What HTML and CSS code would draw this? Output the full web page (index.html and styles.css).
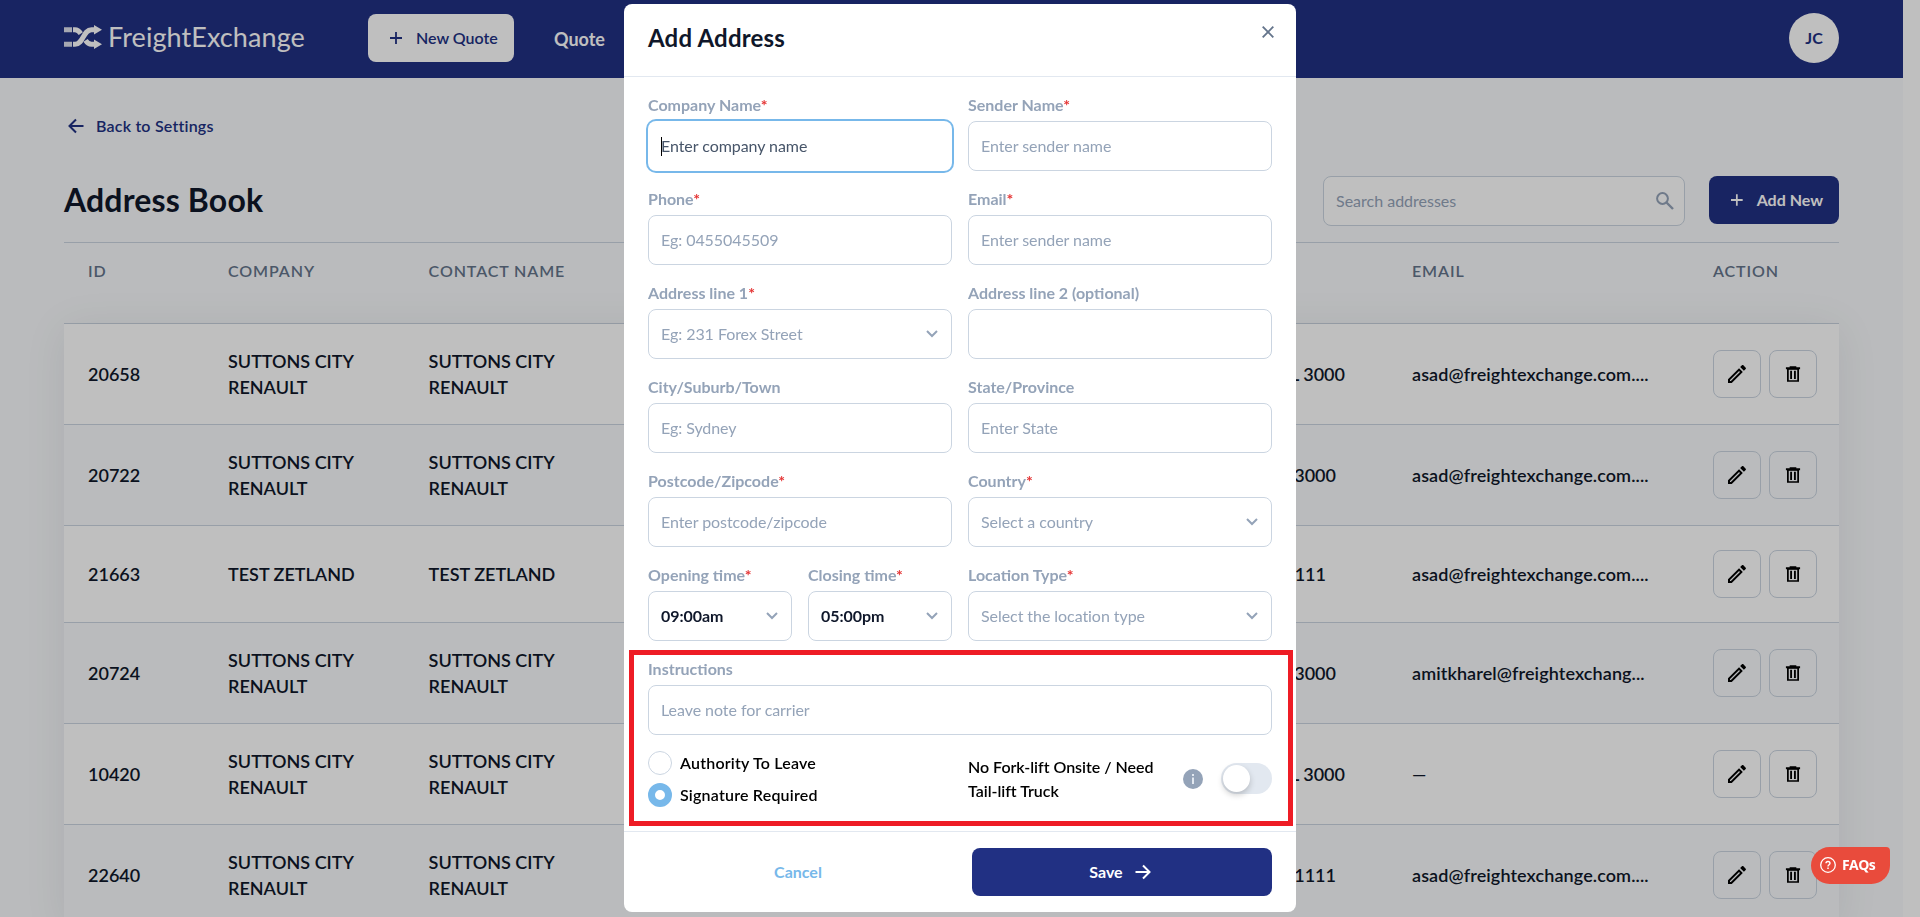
FILE: index.html
```html
<!DOCTYPE html>
<html lang="en">
<head>
    <meta charset="UTF-8">
    <meta name="viewport" content="width=device-width, initial-scale=1.0">
    <title>Address Book - FreightExchange</title>
    <link rel="stylesheet" href="styles.css">
</head>
<body>

<!-- Shared icons -->
<svg class="sprite">
    <symbol id="pencil" viewBox="0 0 24 24">
        <path d="M14.06 9.02l.92.92L5.92 19H5v-.92l9.06-9.06M17.66 3c-.25 0-.51.1-.7.29l-1.83 1.83 3.75 3.75 1.83-1.83c.39-.39.39-1.02 0-1.41l-2.34-2.34c-.2-.2-.45-.29-.71-.29zm-3.6 3.19L3 17.25V21h3.75L17.81 9.94l-3.75-3.75z"/>
    </symbol>
    <symbol id="trash" viewBox="0 0 24 24">
        <path d="M3.500 4H8V2.600h8V4h4.500v2.200H3.500z"/>
        <path fill-rule="evenodd" d="M4.800 6h14.400v15.400H4.800zM6.900 7v12.400h10.200V7z"/>
        <path d="M8.600 8h2.200v10H8.600zM13.200 8h2.200v10h-2.200z"/>
    </symbol>
    <symbol id="chevron" viewBox="0 0 12 8">
        <path d="M1 1l5 5 5-5" fill="none" stroke="currentColor" stroke-width="2"/>
    </symbol>
    <symbol id="plus" viewBox="0 0 14 14">
        <path d="M7 1v12M1 7h12" fill="none" stroke="currentColor" stroke-width="1.800"/>
    </symbol>
    <symbol id="arrow" viewBox="0 0 16 16">
        <path d="M0.500 8H14M8 1.500L14.500 8 8 14.500" fill="none" stroke="currentColor" stroke-width="2"/>
    </symbol>
</svg>

<div class="page">
    <header class="topbar">
        <div class="logo">
            <svg width="38" height="24" viewBox="0 0 38 24">
                <path d="M9 4.700h2c3 0 4.300 1.600 5.800 3.900" fill="none" stroke="#fff" stroke-width="5"/>
                <path d="M9 19.300h2c8.500 0 8-14.600 16.500-14.600h4" fill="none" stroke="#fff" stroke-width="5"/>
                <path d="M21.500 15.400c1.500 2.300 3 3.900 6 3.900h4" fill="none" stroke="#fff" stroke-width="5"/>
                <path d="M30 0L38 4.700l-8 4.700zM30 14.600L38 19.300 30 24z" fill="#fff"/>
                <path d="M0 2.200h8v5H0zM0 16.800h8v5H0z" fill="#fff" fill-opacity=".85"/>
            </svg>
            <span>FreightExchange</span>
        </div>
        <button class="btn btn-light"><svg class="plus"><use href="#plus"/></svg>New Quote</button>
        <a class="nav-link">Quote</a>
        <div class="avatar">JC</div>
    </header>

    <main class="content">
        <a class="back"><svg class="arrow"><use href="#arrow"/></svg>Back to Settings</a>
        <div class="title-row">
            <h1>Address Book</h1>
            <div class="search">
                <span>Search addresses</span>
                <svg width="18" height="18" viewBox="0 0 18 18" fill="none" stroke="#94a3b8" stroke-width="2">
                    <circle cx="6.500" cy="6.500" r="5.400"/>
                    <path d="M10.500 10.500l6.500 6.500" stroke-width="2.400"/>
                </svg>
            </div>
            <button class="btn btn-primary"><svg class="plus"><use href="#plus"/></svg>Add New</button>
        </div>

        <div class="table">
            <div class="row head">
                <div>ID</div><div>COMPANY</div><div>CONTACT NAME</div><div></div><div>EMAIL</div><div>ACTION</div>
            </div>
            <div class="rows" id="rows"></div>
        </div>
    </main>
</div>

<div class="overlay">
    <div class="modal">
        <div class="modal-head">
            <h2>Add Address</h2>
            <svg class="close" width="12" height="12" viewBox="0 0 12 12"><path d="M.7.7l10.600 10.600M11.300.7L.7 11.300" stroke="#64748b" stroke-width="1.900"/></svg>
        </div>
        <div class="modal-body">
            <div class="form">
                <div class="field">
                    <label>Company Name<i>*</i></label>
                    <div class="input focused"><span class="caret"></span>Enter company name</div>
                </div>
                <div class="field">
                    <label>Sender Name<i>*</i></label>
                    <div class="input">Enter sender name</div>
                </div>
                <div class="field">
                    <label>Phone<i>*</i></label>
                    <div class="input">Eg: 0455045509</div>
                </div>
                <div class="field">
                    <label>Email<i>*</i></label>
                    <div class="input">Enter sender name</div>
                </div>
                <div class="field">
                    <label>Address line 1<i>*</i></label>
                    <div class="input">Eg: 231 Forex Street<svg class="chev"><use href="#chevron"/></svg></div>
                </div>
                <div class="field">
                    <label>Address line 2 (optional)</label>
                    <div class="input"></div>
                </div>
                <div class="field">
                    <label>City/Suburb/Town</label>
                    <div class="input">Eg: Sydney</div>
                </div>
                <div class="field">
                    <label>State/Province</label>
                    <div class="input">Enter State</div>
                </div>
                <div class="field">
                    <label>Postcode/Zipcode<i>*</i></label>
                    <div class="input">Enter postcode/zipcode</div>
                </div>
                <div class="field">
                    <label>Country<i>*</i></label>
                    <div class="input">Select a country<svg class="chev"><use href="#chevron"/></svg></div>
                </div>
                <div class="times">
                    <div class="field">
                        <label>Opening time<i>*</i></label>
                        <div class="input filled">09:00am<svg class="chev"><use href="#chevron"/></svg></div>
                    </div>
                    <div class="field">
                        <label>Closing time<i>*</i></label>
                        <div class="input filled">05:00pm<svg class="chev"><use href="#chevron"/></svg></div>
                    </div>
                </div>
                <div class="field">
                    <label>Location Type<i>*</i></label>
                    <div class="input">Select the location type<svg class="chev"><use href="#chevron"/></svg></div>
                </div>
                <div class="field wide">
                    <label>Instructions</label>
                    <div class="input">Leave note for carrier</div>
                </div>
                <div class="radios">
                    <div class="radio"><span class="dot"></span>Authority To Leave</div>
                    <div class="radio"><span class="dot checked"></span>Signature Required</div>
                </div>
                <div class="forklift">
                    <p>No Fork-lift Onsite / Need Tail-lift Truck</p>
                    <svg class="info" width="20" height="20" viewBox="0 0 20 20">
                        <circle cx="10" cy="10" r="10" fill="#94a3b8"/>
                        <path d="M9 5h2v2H9zM9 8.500h2V15H9z" fill="#e2e8f0"/>
                    </svg>
                    <span class="toggle"><span class="knob"></span></span>
                </div>
            </div>
            <div class="highlight"></div>
        </div>
        <div class="modal-foot">
            <button class="btn btn-cancel">Cancel</button>
            <button class="btn btn-save">Save<svg class="arrow"><use href="#arrow"/></svg></button>
        </div>
    </div>
</div>

<div class="faqs">
    <svg width="16" height="16" viewBox="0 0 16 16" fill="none" stroke="#fff">
        <circle cx="8" cy="8" r="7.300" stroke-width="1.300"/>
        <path d="M6 6.300C6 3.900 10 3.900 10 6.300 10 7.700 8 7.700 8 9.400" stroke-width="1.400"/>
        <path d="M8 10.600v1.500" stroke-width="1.500"/>
    </svg>
    FAQs
</div>

<script>
    const addresses = [
        { id: 20658, name: 'SUTTONS CITY RENAULT', postcode: 'L 3000', end: 43, email: 'asad@freightexchange.com....' },
        { id: 20722, name: 'SUTTONS CITY RENAULT', postcode: '3000', end: 52, email: 'asad@freightexchange.com....' },
        { id: 21663, name: 'TEST ZETLAND', postcode: '1111', end: 62, email: 'asad@freightexchange.com....' },
        { id: 20724, name: 'SUTTONS CITY RENAULT', postcode: '3000', end: 52, email: 'amitkharel@freightexchang...' },
        { id: 10420, name: 'SUTTONS CITY RENAULT', postcode: 'L 3000', end: 43, email: '—' },
        { id: 22640, name: 'SUTTONS CITY RENAULT', postcode: '1111', end: 52, email: 'asad@freightexchange.com....' }
    ];

    document.getElementById('rows').innerHTML = addresses.map(a => `
        <div class="row">
            <div>${a.id}</div>
            <div>${a.name}</div>
            <div>${a.name}</div>
            <div class="postcode" style="padding-right: ${a.end}px">${a.postcode}</div>
            <div class="email">${a.email}</div>
            <div class="actions">
                <button><svg><use href="#pencil"/></svg></button>
                <button><svg><use href="#trash"/></svg></button>
            </div>
        </div>`).join('');
</script>

</body>
</html>
```
FILE: styles.css
```css
* {
    box-sizing: border-box;
}
body {
    margin: 0;
    height: 917px;
    overflow: hidden;
    background: white;
    font-family: Lato, "Liberation Sans", sans-serif;
    font-size: 16px;
    line-height: 24px;
    color: #0f172a;
}
.sprite {
    display: none;
}
h1, h2, p {
    margin: 0;
}
button {
    font: inherit;
    color: inherit;
}
.page {
    width: 1903px;
    height: 917px;
    overflow: hidden;
    background: #f8fafc;
}

/* Top bar */
.topbar {
    display: flex;
    align-items: center;
    height: 78px;
    padding: 0 64px;
    background: #213083;
    color: white;
}
.topbar .btn {
    margin-top: -2px;
}
.logo {
    display: flex;
    align-items: center;
    gap: 6px;
    width: 304px;
    margin-top: -4px;
}
.logo span {
    font-size: 27px;
    letter-spacing: 0.08px;
    white-space: nowrap;
}
.btn {
    display: flex;
    align-items: center;
    height: 48px;
    border: none;
    border-radius: 8px;
    font-weight: 700;
    padding: 0 16px 0 21px;
    white-space: nowrap;
}
.plus {
    width: 14px;
    height: 14px;
    margin-right: 13px;
}
.arrow {
    width: 16px;
    height: 16px;
}
.btn-light {
    width: 146px;
    background: white;
    color: #213083;
    font-weight: 600;
}
.btn-primary {
    width: 130px;
    background: #213083;
    color: white;
}
.nav-link {
    margin-left: 40px;
    font-size: 18px;
    font-weight: 700;
}
.avatar {
    width: 50px;
    height: 50px;
    margin: -2px 0 0 auto;
    border-radius: 50%;
    background: white;
    color: #213083;
    font-weight: 700;
    line-height: 50px;
    text-align: center;
}

/* Address book */
.content {
    padding: 36px 64px 0;
}
.back {
    display: flex;
    align-items: center;
    gap: 12px;
    padding-left: 4px;
    color: #213083;
    font-weight: 600;
    letter-spacing: 0.2px;
}
.back .arrow {
    transform: scaleX(-1);
}
.title-row {
    display: flex;
    align-items: flex-start;
    margin-top: 38px;
    height: 66px;
}
h1 {
    flex: 1;
    font-size: 32px;
    line-height: 48px;
    font-weight: 700;
    letter-spacing: 0.15px;
}
.search {
    display: flex;
    align-items: center;
    justify-content: space-between;
    width: 362px;
    height: 50px;
    margin-right: 24px;
    padding: 0 10px 0 12px;
    border: 1px solid #cbd5e1;
    border-radius: 8px;
    background: white;
    color: #94a3b8;
}
.row {
    display: grid;
    grid-template-columns: 140px 200.6px 200px 1fr 301px 150px;
    align-items: center;
    padding: 24px 0;
    border-bottom: 1px solid #cbd5e1;
    background: #f8fafc;
    font-size: 18px;
    font-weight: 600;
    line-height: 26px;
}
.row > div {
    padding: 0 24px;
}
.row:nth-child(odd) {
    background: white;
}
.row.head {
    height: 82px;
    align-items: start;
    padding: 16px 0;
    border-top: 1px solid #cbd5e1;
    background: #f8fafc;
    color: #64748b;
    font-size: 16px;
    line-height: 24px;
    letter-spacing: 0.9px;
}
.rows {
    box-shadow: 0 4px 40px rgba(15, 23, 42, 0.08);
}
.row > .postcode {
    text-align: right;
}
.row > .email {
    letter-spacing: 0.1px;
}
.actions {
    display: flex;
    gap: 8px;
}
.actions button {
    flex: none;
    width: 48px;
    height: 48px;
    padding: 0;
    border: 1px solid #cbd5e1;
    border-radius: 8px;
    background: transparent;
}
.actions svg {
    display: block;
    width: 24px;
    height: 24px;
    margin: auto;
    fill: black;
}
.actions button + button svg {
    width: 20px;
    height: 20px;
}

/* Modal */
.overlay {
    position: fixed;
    inset: 0;
    background: rgba(0, 0, 0, 0.25);
    padding-top: 4px;
}
.modal {
    width: 672px;
    height: 908px;
    margin: 0 auto;
    border-radius: 8px;
    background: white;
}
.modal-head {
    display: flex;
    justify-content: space-between;
    height: 73px;
    padding: 16px 22px 0 24px;
    border-bottom: 1px solid #e2e8f0;
}
.modal-head h2 {
    font-size: 24px;
    line-height: 36px;
    letter-spacing: 0.2px;
    font-weight: 700;
}
.close {
    margin-top: 6px;
}
.modal-body {
    position: relative;
    height: 754px;
    padding: 16px 24px 0;
}
.form {
    display: grid;
    grid-template-columns: 304px 304px;
    gap: 16px;
}
.wide {
    grid-column: span 2;
}
.times {
    display: grid;
    grid-template-columns: 144px 144px;
    gap: 16px;
}
label {
    display: block;
    margin-bottom: 4px;
    color: #94a3b8;
    font-weight: 700;
}
label i {
    color: #e53535;
    font-style: normal;
}
.input {
    display: flex;
    align-items: center;
    height: 50px;
    padding: 0 13px 0 12px;
    border: 1px solid #cbd5e1;
    border-radius: 8px;
    color: #94a3b8;
    letter-spacing: -0.06px;
}
.input.focused {
    border-color: transparent;
    box-shadow: 0 0 0 2px #77b8ea;
    color: #475569;
}
.input.filled {
    color: #0f172a;
    font-weight: 700;
}
.caret {
    width: 1px;
    height: 19px;
    margin-right: -1px;
    background: black;
}
.chev {
    width: 12px;
    height: 8px;
    margin-left: auto;
    color: #94a3b8;
}
.radios {
    display: grid;
    gap: 8px;
}
.radio {
    display: flex;
    gap: 8px;
    color: black;
    font-weight: 600;
    letter-spacing: 0.2px;
}
.dot {
    width: 24px;
    height: 24px;
    border: 1px solid #cbd5e1;
    border-radius: 50%;
}
.dot.checked {
    border: 7px solid #77b8ea;
}
.forklift {
    display: flex;
    align-items: center;
    color: black;
    font-weight: 600;
}
.forklift p {
    width: 200px;
    letter-spacing: -0.03px;
}
.info {
    margin-left: 15px;
}
.toggle {
    width: 51px;
    height: 31px;
    margin: -1px 0 0 auto;
    padding: 2px;
    border-radius: 16px;
    background: #e2e8f0;
}
.knob {
    display: block;
    width: 27px;
    height: 27px;
    border-radius: 50%;
    background: white;
    box-shadow: 0 3px 6px rgba(0, 0, 0, 0.2);
}
/* Marker drawn over the delivery options */
.highlight {
    position: absolute;
    left: 5px;
    top: 573px;
    width: 664px;
    height: 176px;
    border: 5px solid #ee1c25;
}
.modal-foot {
    display: flex;
    gap: 24px;
    padding: 16px 24px;
    border-top: 1px solid #e2e8f0;
}
.modal-foot .btn {
    width: 300px;
    justify-content: center;
    padding: 0;
}
.modal-foot .btn-cancel {
    background: transparent;
    color: #77b8ea;
}
.modal-foot .btn-save {
    padding-right: 4px;
    background: #213083;
    color: white;
}
.btn-save .arrow {
    margin-left: 12px;
}

.faqs {
    position: fixed;
    right: 30px;
    top: 847px;
    display: flex;
    align-items: center;
    gap: 6px;
    width: 79px;
    height: 37px;
    padding: 0 0 1px 9px;
    border-radius: 19px 4px 19px 19px;
    background: #e94b3c;
    color: white;
    font-family: "Open Sans", sans-serif;
    font-size: 14px;
    font-weight: 700;
    letter-spacing: -0.6px;
}
```
